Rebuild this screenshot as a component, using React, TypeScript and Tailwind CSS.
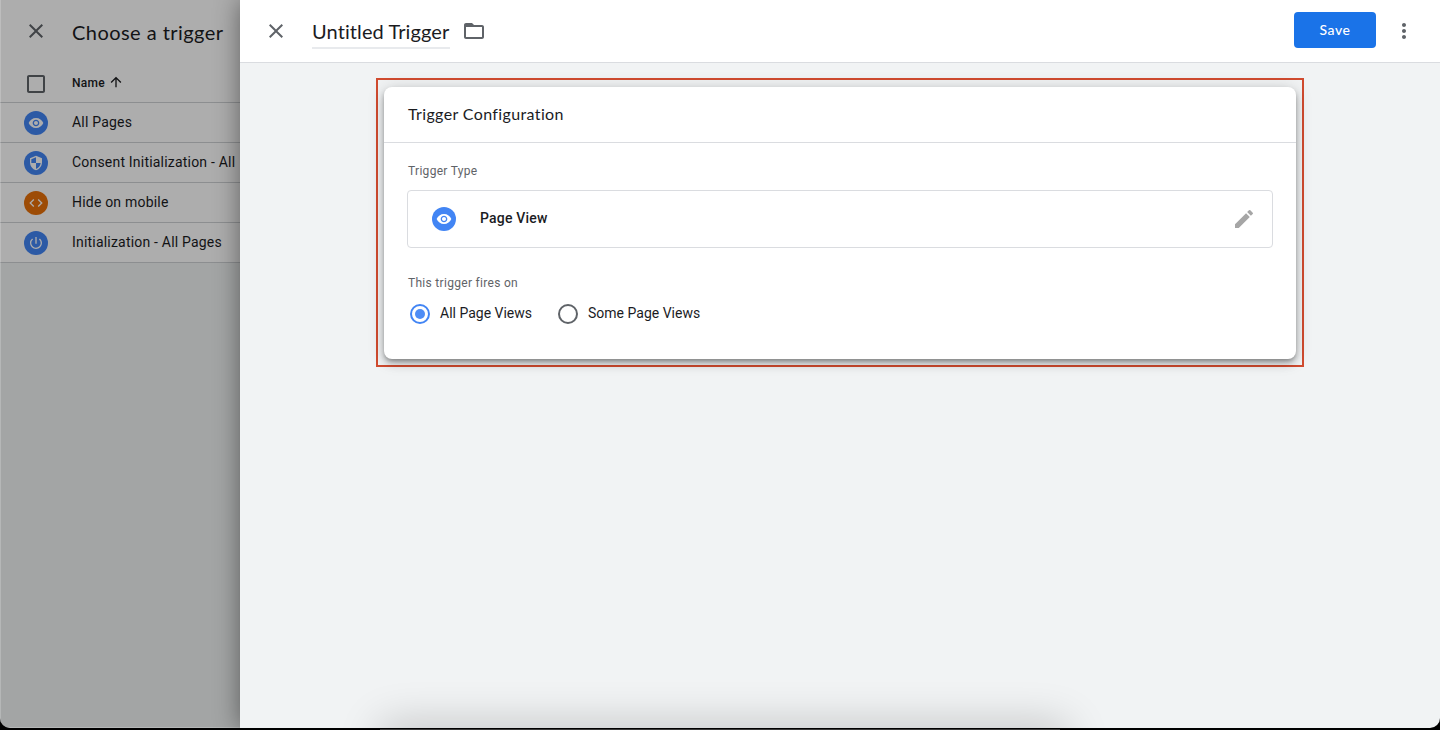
import { useState } from "react";
import type { IconType } from "react-icons";
import {
  MdArrowUpward,
  MdCheckBoxOutlineBlank,
  MdClose,
  MdCode,
  MdEdit,
  MdFolderOpen,
  MdMoreVert,
  MdPowerSettingsNew,
  MdSecurity,
  MdVisibility,
} from "react-icons/md";

interface Trigger {
  name: string
  icon: IconType
  color: string
}

const TRIGGERS: Trigger[] = [
  { name: "All Pages", icon: MdVisibility, color: "bg-[#4285f4]" },
  { name: "Consent Initialization - All", icon: MdSecurity, color: "bg-[#4285f4]" },
  { name: "Hide on mobile", icon: MdCode, color: "bg-[#e8710a]" },
  { name: "Initialization - All Pages", icon: MdPowerSettingsNew, color: "bg-[#4285f4]" },
];

const FIRES_ON = ["All Page Views", "Some Page Views"];

function TriggerIcon({ icon: Icon, color }: { icon: IconType; color: string }) {
  return (
    <span className={`flex size-6 shrink-0 items-center justify-center rounded-full text-white ${color}`}>
      <Icon size={16} />
    </span>
  );
}

function TriggerList() {
  return (
    <aside className="relative w-60 shrink-0 overflow-hidden bg-[#f1f3f4]">
      <div className="bg-white">
        <div className="flex h-16 items-center pl-6">
          <MdClose size={24} className="mb-0.5 text-[#5f6368]" />
          <h2 className="mb-px ml-6 whitespace-nowrap font-['Lato',sans-serif] text-[20px] tracking-[0.45px]">Choose a trigger</h2>
        </div>
        <div className="flex h-[39px] items-center border-b border-[#cfd1d4] pl-6">
          <MdCheckBoxOutlineBlank size={24} className="mt-0.5 text-[#5f6368]" />
          <span className="ml-6 text-[12px] font-medium tracking-[0.3px]">Name</span>
          <MdArrowUpward size={16} className="mb-0.5 ml-[3px]" />
        </div>
        {TRIGGERS.map((trigger) => (
          <div key={trigger.name} className="flex h-10 items-center border-b border-[#cfd1d4] pl-6">
            <TriggerIcon icon={trigger.icon} color={trigger.color} />
            <span className="mb-px ml-6 whitespace-nowrap text-[14px] tracking-[0.2px]">{trigger.name}</span>
          </div>
        ))}
      </div>
      <div className="absolute inset-0 border-b border-l border-white/20 bg-black/32" />
    </aside>
  );
}

function Radio({ label, checked, onSelect }: { label: string; checked: boolean; onSelect: () => void }) {
  return (
    <button type="button" role="radio" aria-checked={checked} onClick={onSelect} className="flex items-center">
      <span className={`flex size-5 items-center justify-center rounded-full border-2 ${checked ? "border-[#4285f4]" : "border-[#5f6368]"}`}>
        {checked && <span className="size-2.5 rounded-full bg-[#4f8df5]" />}
      </span>
      <span className="ml-2.5 text-[14px]">{label}</span>
    </button>
  );
}

function TriggerConfiguration() {
  const [firesOn, setFiresOn] = useState(FIRES_ON[0]);

  return (
    <section className="h-[272px] rounded-lg bg-white shadow-[0_3px_5px_-1px_rgba(0,0,0,0.35),0_5px_10px_rgba(0,0,0,0.16),0_1px_18px_rgba(0,0,0,0.14)]">
      <h3 className="flex h-14 items-center border-b border-[#dadce0] px-6 pb-0.5 font-['Lato',sans-serif] text-[16px] tracking-[0.37px]">
        Trigger Configuration
      </h3>
      <div className="px-[23px] pt-5">
        <div className="pl-px text-[12px] leading-4 tracking-[0.3px] text-[#5f6368]">Trigger Type</div>
        <div className="mt-[11px] flex h-[58px] items-center rounded border border-[#dadce0] pr-4 pl-6">
          <TriggerIcon icon={MdVisibility} color="bg-[#4285f4]" />
          <span className="mb-0.5 ml-6 text-[14px] font-medium tracking-[0.2px]">Page View</span>
          <MdEdit size={24} className="ml-auto text-[#a6a6a6]" />
        </div>
        <div className="mt-[27px] pl-px text-[12px] leading-4 tracking-[0.3px] text-[#5f6368]">This trigger fires on</div>
        <div className="mt-3 flex gap-[26px] pl-[3px]" role="radiogroup">
          {FIRES_ON.map((option) => (
            <Radio key={option} label={option} checked={firesOn === option} onSelect={() => setFiresOn(option)} />
          ))}
        </div>
      </div>
    </section>
  );
}

function TriggerEditor() {
  return (
    <main className="relative z-10 flex flex-1 flex-col bg-[#f1f3f4] shadow-[0_0_24px_rgba(0,0,0,0.45)]">
      <header className="flex h-[63px] items-center border-b border-[#dadce0] bg-white pr-6 pl-6">
        <MdClose size={24} className="text-[#5f6368]" />
        <h1 className="mt-0.5 ml-6 w-[138px] whitespace-nowrap border-b-2 border-[#e8eaed] font-['Lato',sans-serif] text-[20px] leading-[32px] tracking-[0.1px]">
          Untitled Trigger
        </h1>
        <MdFolderOpen size={24} className="ml-3 text-[#5f6368]" />
        <button type="button" className="mb-0.5 ml-auto h-9 w-[82px] rounded bg-[#1a73e8] pb-0.5 font-['Lato',sans-serif] text-[14px] font-medium tracking-[0.6px] text-white">
          Save
        </button>
        <MdMoreVert size={24} className="mb-px ml-4 text-[#5f6368]" />
      </header>
      <div className="mx-auto mt-[15px] w-[928px] border-2 border-[#d14b2f] p-1.5 pt-[7px]">
        <TriggerConfiguration />
      </div>
    </main>
  );
}

export default function App() {
  return (
    <div className="h-[730px] w-full overflow-hidden bg-black font-['Roboto',sans-serif] text-[#1b1c1f]">
      <div className="relative flex h-[728px] overflow-hidden rounded-b-[10px]">
        <TriggerList />
        <TriggerEditor />
        <div className="absolute -bottom-8 left-[385px] z-20 h-8 w-[678px] shadow-[0_0_44px_4px_rgba(0,0,0,0.2)]" />
      </div>
      <div className="mx-auto mt-px h-px w-[680px] bg-[#3a3a3a]" />
    </div>
  );
}
